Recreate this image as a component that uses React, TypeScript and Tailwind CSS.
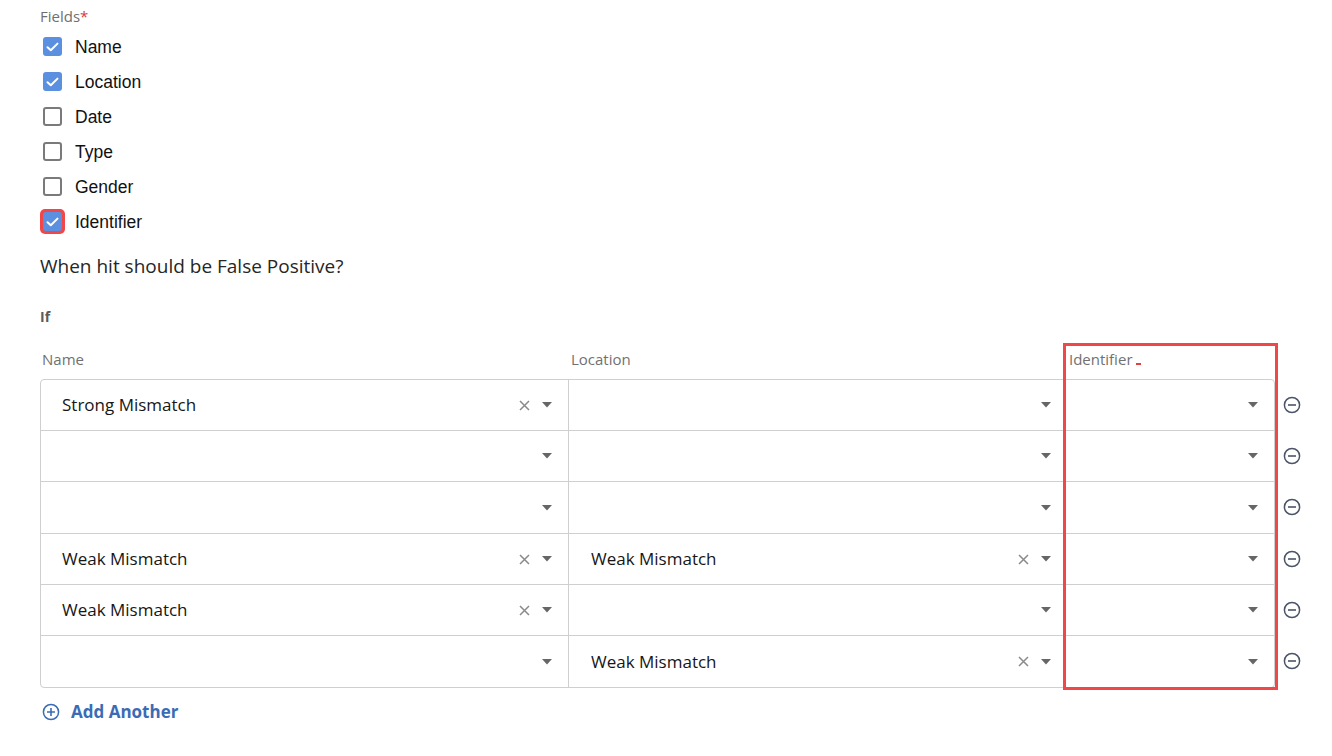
import React from "react";

type Row = { name?: string; location?: string; tall?: boolean };

const rows: Row[] = [
  { name: "Strong Mismatch" },
  {},
  { tall: true },
  { name: "Weak Mismatch", location: "Weak Mismatch" },
  { name: "Weak Mismatch" },
  { location: "Weak Mismatch" },
];

const fields = [
  { label: "Name", checked: true },
  { label: "Location", checked: true },
  { label: "Date", checked: false },
  { label: "Type", checked: false },
  { label: "Gender", checked: false },
  { label: "Identifier", checked: true, focused: true },
];

function Check({ checked }: { checked: boolean }) {
  if (checked) {
    return (
      <span className="flex h-[19px] w-[19px] items-center justify-center rounded-[3px] bg-[#5b8fdf]">
        <svg width="13" height="10" viewBox="0 0 13 10" fill="none">
          <path d="M1.5 5.2 L4.8 8.3 L11.5 1.6" stroke="#fff" strokeWidth="2" strokeLinecap="round" strokeLinejoin="round" />
        </svg>
      </span>
    );
  }
  return <span className="block h-[19px] w-[19px] rounded-[3px] border-2 border-[#7a7a7a] bg-white" />;
}

function Caret() {
  return (
    <svg width="10" height="6" viewBox="0 0 10 6">
      <path d="M0 0 H10 L5 5.5 Z" fill="#666" />
    </svg>
  );
}

function Clear() {
  return (
    <svg width="11" height="11" viewBox="0 0 11 11">
      <path d="M1 1 L10 10 M10 1 L1 10" stroke="#8a8a8a" strokeWidth="1.5" />
    </svg>
  );
}

function MinusCircle() {
  return (
    <svg width="18" height="18" viewBox="0 0 18 18" fill="none">
      <circle cx="9" cy="9" r="7.6" stroke="#4b5567" strokeWidth="1.5" />
      <path d="M5 9 H13" stroke="#4b5567" strokeWidth="1.6" />
    </svg>
  );
}

function PlusCircle() {
  return (
    <svg width="18" height="18" viewBox="0 0 18 18" fill="none">
      <circle cx="9" cy="9" r="7.6" stroke="#3a6cb5" strokeWidth="1.5" />
      <path d="M5 9 H13 M9 5 V13" stroke="#3a6cb5" strokeWidth="1.6" />
    </svg>
  );
}

function Cell({ value, pad, right, last }: { value?: string; pad: string; right: string; last?: boolean }) {
  return (
    <div className={`flex h-full items-center ${pad} ${right} ${last ? "" : "border-r border-[#cfcfcf]"}`}>
      <span className="flex-1 truncate text-[17px] text-[#161616]">{value}</span>
      {value ? (
        <span className="mr-[12px] flex items-center">
          <Clear />
        </span>
      ) : null}
      <Caret />
    </div>
  );
}

export default function App() {
  return (
    <div className="min-h-screen bg-white pl-10 pt-[6px] font-['Open_Sans','Noto_Sans',sans-serif] text-[#222]">
      <div className="h-5 text-[15px] leading-5 text-[#6f6f6f]">
        Fields<span className="text-[#d43b3b]">*</span>
      </div>

      <div className="mt-[3px] flex flex-col">
        {fields.map((f) => (
          <label key={f.label} className="flex h-[35px] items-center">
            <span className="flex w-[35px] items-center pl-[3px]">
              {f.focused ? (
                <span className="-ml-[3px] flex h-[25px] w-[25px] items-center justify-center rounded-[5px] bg-[#f04848]">
                  <Check checked />
                </span>
              ) : (
                <Check checked={f.checked} />
              )}
            </span>
            <span className="font-['Liberation_Sans',Arial,sans-serif] text-[17.5px] leading-[22px] text-[#111]">{f.label}</span>
          </label>
        ))}
      </div>

      <div className="mt-[14px] h-[26px] text-[19px] leading-[26px] text-[#262626]">When hit should be False Positive?</div>

      <div className="mt-[28px] h-5 text-[14px] font-bold leading-5 text-[#5a5a5a]">If</div>

      <div className="relative mt-[22px] w-[1275px]">
        <div className="grid w-[1235px] grid-cols-[528px_497px_1fr] text-[15px] leading-5 text-[#717171]">
          <div className="pl-[2px]">Name</div>
          <div className="pl-[3px]">Location</div>
          <div className="flex items-end pl-[4px]">
            Identifier
            <span className="mb-[4px] ml-[3px] block h-[2px] w-[5px] bg-[#e53e3e]" />
          </div>
        </div>

        <div className="mt-[10px] flex items-start gap-[8px]">
          <div className="w-[1235px] overflow-hidden rounded-[4px] border border-[#cfcfcf]">
            {rows.map((r, i) => (
              <div
                key={i}
                className={`grid grid-cols-[528px_497px_1fr] ${r.tall ? "h-[52px]" : "h-[51px]"} ${i < rows.length - 1 ? "border-b border-[#cfcfcf]" : ""}`}
              >
                <Cell value={r.name} pad="pl-[21px]" right="pr-[16px]" />
                <Cell value={r.location} pad="pl-[22px]" right="pr-[14px]" />
                <Cell pad="pl-[22px]" right="pr-[16px]" last />
              </div>
            ))}
          </div>
          <div className="flex flex-col">
            {rows.map((r, i) => (
              <div key={i} className={`flex items-center ${r.tall ? "h-[52px]" : "h-[51px]"}`}>
                <MinusCircle />
              </div>
            ))}
          </div>
        </div>

        <div className="pointer-events-none absolute left-[1023px] top-[-6px] bottom-[-2px] w-[215px] border-[3px] border-[#f04848]" />
      </div>

      <button className="mt-[12px] flex h-6 items-center gap-[11px] pl-[2px] text-[17px] font-bold text-[#3a6cb5]">
        <PlusCircle />
        Add Another
      </button>
    </div>
  );
}
